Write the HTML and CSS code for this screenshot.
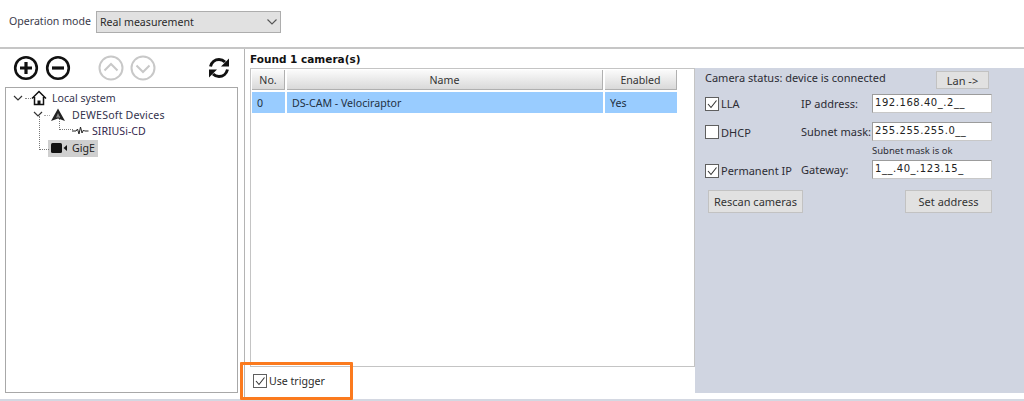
FILE: index.html
```html
<!DOCTYPE html>
<html lang="en">
<head>
<meta charset="utf-8">
<title>Camera settings</title>
<link rel="stylesheet" href="styles.css">
</head>
<body>
<div class="page">
  <header class="topbar">
    <span class="mode-label">Operation mode</span>
    <div class="select">
      <span>Real measurement</span>
      <svg class="select-arrow" width="12" height="8" viewBox="0 0 12 8"><path d="M1.500 1.500 6 6l4.500-4.500" fill="none" stroke="#555" stroke-width="1.100"/></svg>
    </div>
  </header>
  <main class="main">
    <section class="left">
      <div class="toolbar">
        <svg class="tool tool-plus" width="26" height="26" viewBox="0 0 26 26"><circle cx="13" cy="13" r="10.800" fill="none" stroke="#111" stroke-width="2.600"/><path d="M13 7v12M7 13h12" stroke="#111" stroke-width="3.200"/></svg>
        <svg class="tool tool-minus" width="26" height="26" viewBox="0 0 26 26"><circle cx="13" cy="13" r="10.800" fill="none" stroke="#111" stroke-width="2.600"/><path d="M7 13h12" stroke="#111" stroke-width="3.200"/></svg>
        <svg class="tool tool-up" width="26" height="26" viewBox="0 0 26 26"><circle cx="13" cy="13" r="11.500" fill="none" stroke="#c8c8c8" stroke-width="2"/><path d="M6.500 15.500 13 9l6.500 6.500" fill="none" stroke="#c8c8c8" stroke-width="2"/></svg>
        <svg class="tool tool-down" width="26" height="26" viewBox="0 0 26 26"><circle cx="13" cy="13" r="11.500" fill="none" stroke="#c8c8c8" stroke-width="2"/><path d="M6.500 10.500 13 17l6.500-6.500" fill="none" stroke="#c8c8c8" stroke-width="2"/></svg>
        <svg class="tool tool-refresh" width="26" height="26" viewBox="0 0 26 26"><path d="M4.500 11.500C5.500 7.500 9 4.500 13 4.500c2.500 0 4.500 1 6 2.500M21.500 14.500c-1 4-4.500 7-8.500 7-2.500 0-4.500-1-6-2.500" fill="none" stroke="#111" stroke-width="3"/><path d="M23 3.500v8h-8zM3 22.500v-8h8z" fill="#111"/></svg>
      </div>
      <div class="tree">
        <div class="node node-root">
          <svg class="chev" width="10" height="7" viewBox="0 0 10 7"><path d="M1 1l4 4 4-4" fill="none" stroke="#333" stroke-width="1.200"/></svg>
          <svg class="node-icon" width="16" height="16" viewBox="0 0 16 16"><path d="M1 8.500 8 1.500l7 7M3.500 7v7.500h9V7" fill="none" stroke="#111" stroke-width="1.500"/><path d="M6.500 15v-4.500h3V15" fill="#111"/></svg>
          <span>Local system</span>
        </div>
        <div class="node node-dewe">
          <svg class="chev" width="10" height="7" viewBox="0 0 10 7"><path d="M1 1l4 4 4-4" fill="none" stroke="#333" stroke-width="1.200"/></svg>
          <svg class="node-icon" width="14" height="14" viewBox="0 0 14 14"><path d="M7 .5 14 13 7 10.500 0 13z" fill="#222"/><path d="M7 5 9 9.500H5z" fill="#888"/></svg>
          <span class="dewe-text">DEWESoft Devices</span>
        </div>
        <div class="node node-sirius">
          <svg class="node-icon" width="17" height="10" viewBox="0 0 17 10"><path d="M0 5h4l1.500-2 1.500 5 1.500-7 1.500 6 1.500-3 1 1h4" fill="none" stroke="#222"/></svg>
          <span>SIRIUSi-CD</span>
        </div>
        <div class="node node-gige">
          <span class="selected">
            <svg class="node-icon" width="16" height="10" viewBox="0 0 16 10"><rect width="11" height="10" rx="1.500" fill="#111"/><path d="M12.500 5 16 2v6z" fill="#111"/></svg>
            <span>GigE</span>
          </span>
        </div>
      </div>
    </section>
    <section class="right">
      <div class="found">Found 1 camera(s)</div>
      <div class="content">
        <div class="table-box">
          <div class="table-row table-head">
            <div class="cell col-no">No.</div>
            <div class="cell col-name">Name</div>
            <div class="cell col-enabled">Enabled</div>
          </div>
          <div class="table-row table-data">
            <div class="cell col-no">0</div>
            <div class="cell col-name">DS-CAM - Velociraptor</div>
            <div class="cell col-enabled">Yes</div>
          </div>
        </div>
        <aside class="panel">
          <div class="status-row">
            <span>Camera status: device is connected</span>
            <button class="btn btn-lan">Lan -&gt;</button>
          </div>
          <div class="form-row row-ip">
            <label class="check"><span class="box"><svg width="12" height="12" viewBox="0 0 12 12"><path d="M2 6l3 3.500L10.500 2.500" fill="none" stroke="#333" stroke-width="1.100"/></svg></span>LLA</label>
            <span class="field-label">IP address:</span>
            <div class="input">192.168.40_.2__</div>
          </div>
          <div class="form-row row-mask">
            <label class="check"><span class="box"></span>DHCP</label>
            <span class="field-label">Subnet mask:</span>
            <div class="input">255.255.255.0__</div>
          </div>
          <div class="hint">Subnet mask is ok</div>
          <div class="form-row row-gw">
            <label class="check"><span class="box"><svg width="12" height="12" viewBox="0 0 12 12"><path d="M2 6l3 3.500L10.500 2.500" fill="none" stroke="#333" stroke-width="1.100"/></svg></span>Permanent IP</label>
            <span class="field-label">Gateway:</span>
            <div class="input">1__.40_.123.15_</div>
          </div>
          <div class="actions">
            <button class="btn btn-rescan">Rescan cameras</button>
            <button class="btn btn-set">Set address</button>
          </div>
        </aside>
      </div>
      <div class="trigger">
        <span class="box"><svg width="12" height="12" viewBox="0 0 12 12"><path d="M2 6l3 3.500L10.500 2.500" fill="none" stroke="#333" stroke-width="1.100"/></svg></span>
        <span>Use trigger</span>
      </div>
    </section>
    <div class="highlight"></div>
  </main>
</div>
</body>
</html>
```
FILE: styles.css
```css
* { box-sizing: border-box; }
html, body { margin: 0; padding: 0; background: #fff; }
body { font: 10.600px "Noto Sans", "Liberation Sans", sans-serif; color: #2a2a2a; overflow: hidden; }
.page { width: 1024px; height: 401px; display: flex; flex-direction: column; }

.topbar { height: 49px; padding: 11px 0 0 9px; display: flex; align-items: flex-start; border-bottom: 2px solid #c6c6c6; flex: none; }
.mode-label { line-height: 21px; width: 87px; color: #3a3a4a; }
.select { width: 185px; height: 22px; background: #e1e1e1; border: 1px solid #adadad; padding: 0 3px; display: flex; align-items: center; justify-content: space-between; padding-right: 2px; }

.main { position: relative; flex: 1; display: flex; border-bottom: 2px solid #d4d8e2; min-height: 0; }
.left { width: 245px; border-right: 1px solid #b4b4b4; flex: none; display: flex; flex-direction: column; padding-left: 5px; }
.toolbar { height: 38px; display: flex; align-items: center; padding: 0 0 1px 8px; flex: none; }
.tool-plus { margin-right: 6px; }
.tool-minus { margin-right: 27px; }
.tool-up { margin-right: 6px; }
.tool-down { margin-right: 50px; }
.tree { position: relative; width: 233px; height: 306px; border: 1px solid #a8a8a8; padding-top: 2px; }

.node { height: 16.600px; display: flex; align-items: center; position: relative; color: #33334d; white-space: nowrap; }
.node-root { padding-left: 7px; }
.node-root .node-icon { margin: 0 5px 0 8px; }
.node-root::before { content: ""; position: absolute; left: 19px; top: 8px; width: 6px; border-top: 1px dotted #888; }
.node-dewe { padding-left: 27px; }
.node-dewe .node-icon { margin: 0 7px 0 8px; }
.dewe-text { letter-spacing: .2px; }
.node-dewe::before { content: ""; position: absolute; left: 38px; top: 8px; width: 6px; border-top: 1px dotted #aaa; }
.node-sirius { padding-left: 66px; color: #33264d; }
.node-sirius .node-icon { margin-right: 3px; }
.node-sirius::before { content: ""; position: absolute; left: 53px; top: -7px; width: 13px; height: 13px; border-left: 1px dotted #777; border-bottom: 1px dotted #777; }
.node-gige { padding-left: 42px; }
.node-gige::before { content: ""; position: absolute; left: 33px; top: -24px; width: 9px; height: 33px; border-left: 1px dotted #777; border-bottom: 1px dotted #777; }
.selected { display: flex; align-items: center; background: #cfcfcf; height: 17px; width: 50px; padding-left: 3px; color: #222; }
.selected .node-icon { margin-right: 5px; }

.right { flex: 1; display: flex; flex-direction: column; padding-left: 5px; min-width: 0; }
.found { height: 19px; font: bold 10.500px "DejaVu Sans", sans-serif; line-height: 21px; color: #111; flex: none; }
.content { display: flex; flex: none; height: 299px; }
.table-box { width: 445px; border: 1px solid #c4c4c4; padding: 1px; flex: none; }
.table-row { display: flex; gap: 2px; }
.table-head { height: 20px; margin-bottom: 2px; }
.table-head .cell { background: linear-gradient(#fbfbfb, #d9d9d9); border-right: 1px solid #b0b0b0; border-bottom: 1px solid #b0b0b0; justify-content: center; color: #333; padding-top: 1px; }
.table-data { height: 21px; }
.table-data .cell { background: #99ccff; padding-left: 5px; justify-content: flex-start; color: #23303f; }
.cell { display: flex; align-items: center; height: 100%; }
.col-no { width: 33px; }
.col-name { width: 316px; }
.col-enabled { width: 72px; }

.panel { width: 329px; height: 325px; background: #d0d5e1; padding-left: 10px; flex: none; color: #2c2c34; font-size: 11px; }
.status-row { display: flex; align-items: flex-start; height: 26px; width: 284px; justify-content: space-between; }
.status-row span { line-height: 20px; }
.btn { font: inherit; color: #333; background: #e1e1e1; border: 1px solid #c2c2c2; padding: 0; }
.btn-lan { width: 53px; height: 18px; margin-top: 3px; }
.form-row { display: flex; align-items: center; height: 19px; }
.row-ip { margin-bottom: 9px; }
.check { display: flex; align-items: center; gap: 2px; white-space: nowrap; width: 96px; flex: none; }
.row-mask .check { padding-top: 1px; }
.row-gw .check { padding-top: 2px; }
.box { width: 14px; height: 14px; border: 1px solid #5f5f5f; background: #fff; display: inline-flex; align-items: center; justify-content: center; flex: none; }
.field-label { white-space: nowrap; width: 71px; flex: none; }
.input { height: 19px; width: 120px; flex: none; background: #fff; border: 1px solid #9c9c9c; border-right-color: #c8c8c8; border-bottom-color: #c8c8c8; padding-left: 2px; line-height: 15px; letter-spacing: .55px; font-family: "DejaVu Sans", sans-serif; font-size: 10px; color: #222; }
.hint { height: 19px; padding-left: 167px; font-size: 9.500px; line-height: 20px; }
.actions { display: flex; justify-content: space-between; width: 284px; margin: 11px 0 0 3px; }
.btn-rescan { width: 95px; height: 23px; }
.btn-set { width: 87px; height: 23px; }

.trigger { display: flex; align-items: center; gap: 2px; padding: 7px 0 0 3px; }
.highlight { position: absolute; left: 240px; top: 313px; width: 113px; height: 38px; border: 3px solid #fb7a1e; border-radius: 1px; pointer-events: none; }
```
